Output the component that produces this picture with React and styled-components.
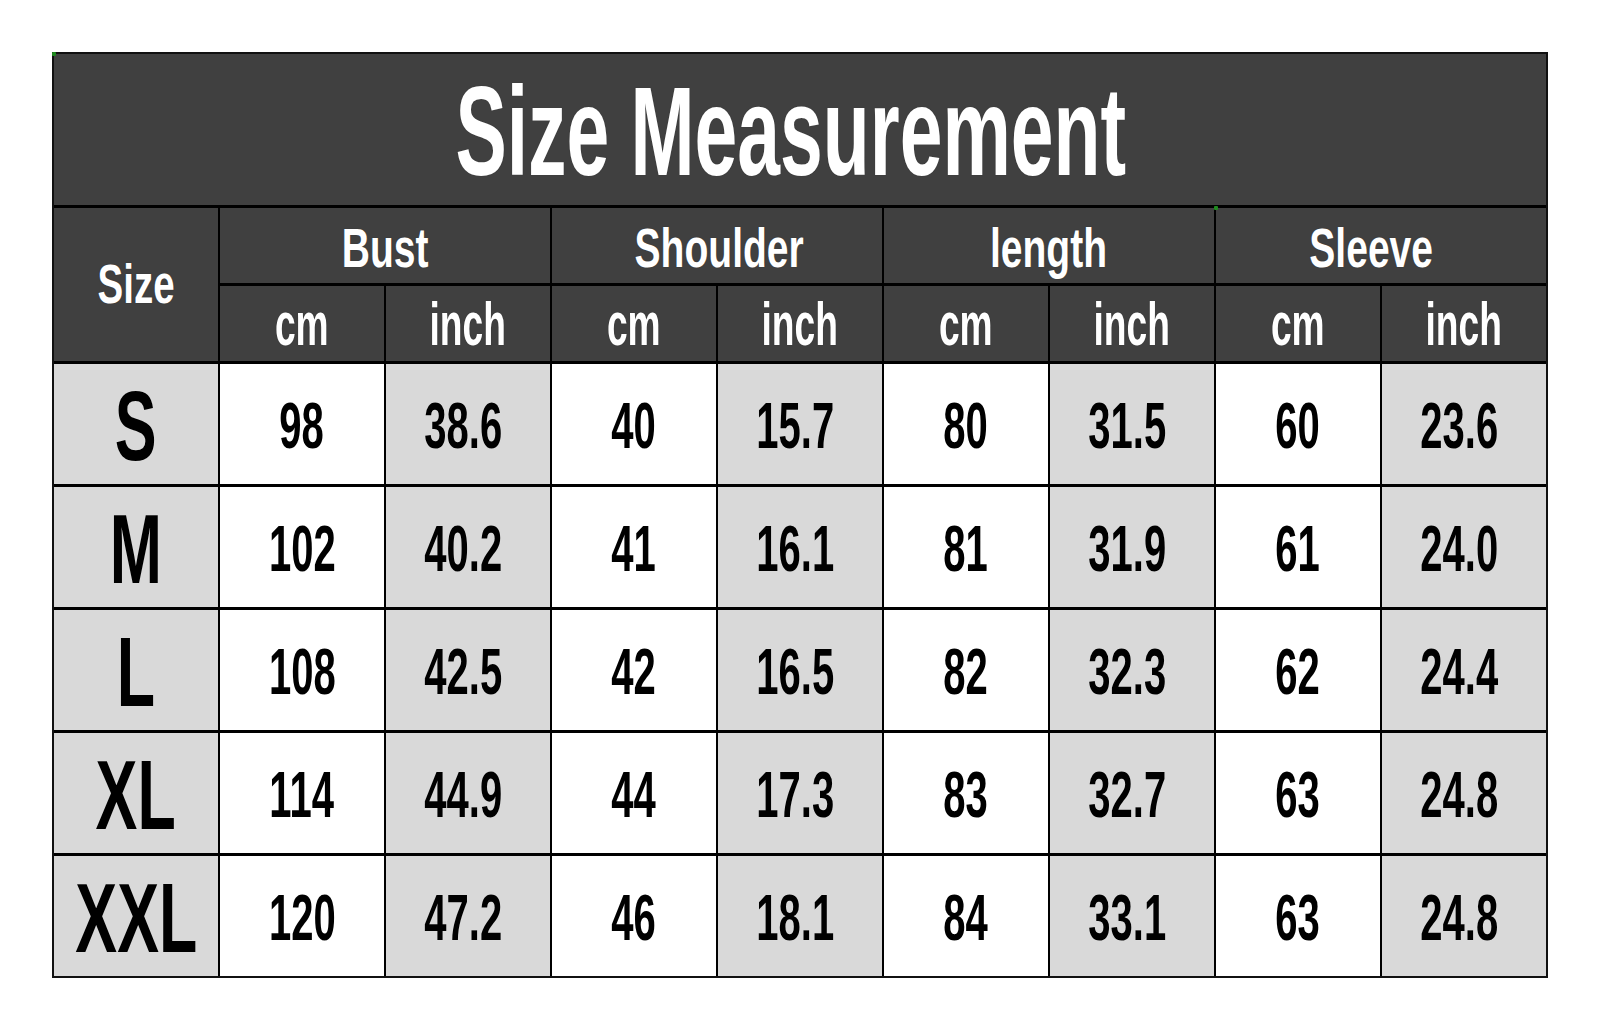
import React from "react";
import styled, { createGlobalStyle } from "styled-components";

const Global = createGlobalStyle`
  html, body { margin: 0; padding: 0; background: #ffffff; }
  body { font-family: "Liberation Sans", Arial, sans-serif; }
`;

const Page = styled.div`
  width: 1600px;
  height: 1031px;
  padding-top: 52px;
  box-sizing: border-box;
`;

const Sheet = styled.div`
  position: relative;
  box-sizing: border-box;
  width: 1496px;
  margin: 0 0 0 52px;
  display: grid;
  grid-template-columns: repeat(9, 1fr);
  grid-template-rows: 151px 75px 75px repeat(5, 120px);
  column-gap: 2px;
  row-gap: 3px;
  background: #000;
  border: 2px solid #111;
`;

const tones = {
  dark: "#404040",
  white: "#ffffff",
  gray: "#d9d9d9",
};

const Cell = styled.div`
  background: ${(p) => tones[p.$tone]};
  color: ${(p) => (p.$tone === "dark" ? "#ffffff" : "#000000")};
  display: flex;
  align-items: center;
  justify-content: center;
  overflow: hidden;
  grid-column: ${(p) => (p.$colSpan ? `span ${p.$colSpan}` : "auto")};
  grid-row: ${(p) => (p.$rowSpan ? `span ${p.$rowSpan}` : "auto")};
`;

const Label = styled.span`
  display: inline-block;
  font-family: "Liberation Sans", Arial, sans-serif;
  font-weight: 700;
  font-size: ${(p) => p.$size}px;
  line-height: 1;
  white-space: nowrap;
  transform: translate(${(p) => p.$dx || 0}px, ${(p) => p.$dy || 0}px)
    scaleX(${(p) => p.$squeeze || 0.61});
  transform-origin: center;
  text-shadow: ${(p) =>
    p.$light
      ? "0 0 1px rgba(40,40,40,0.9)"
      : "0 0 1px rgba(255,255,255,0.6)"};
`;

const Marker = styled.span`
  position: absolute;
  width: 4px;
  height: 4px;
  border-radius: 1px;
  background: #1f8a1f;
  left: ${(p) => p.$x}px;
  top: ${(p) => p.$y}px;
`;

const groups = [
  { name: "Bust", dx: 0 },
  { name: "Shoulder", dx: 2 },
  { name: "length", dx: -1 },
  { name: "Sleeve", dx: -10 },
];

const rows = [
  ["S", "98", "38.6", "40", "15.7", "80", "31.5", "60", "23.6"],
  ["M", "102", "40.2", "41", "16.1", "81", "31.9", "61", "24.0"],
  ["L", "108", "42.5", "42", "16.5", "82", "32.3", "62", "24.4"],
  ["XL", "114", "44.9", "44", "17.3", "83", "32.7", "63", "24.8"],
  ["XXL", "120", "47.2", "46", "18.1", "84", "33.1", "63", "24.8"],
];

export default function App() {
  return (
    <>
      <Global />
      <Page>
        <Sheet>
          <Cell $tone="dark" $colSpan={9}>
            <Label $light $size={126} $squeeze={0.61} $dx={-9} $dy={2}>
              Size Measurement
            </Label>
          </Cell>

          <Cell $tone="dark" $rowSpan={2}>
            <Label $light $size={55} $squeeze={0.7}>
              Size
            </Label>
          </Cell>
          {groups.map((g) => (
            <Cell key={g.name} $tone="dark" $colSpan={2}>
              <Label $light $size={55} $squeeze={0.71} $dx={g.dx} $dy={3}>
                {g.name}
              </Label>
            </Cell>
          ))}
          {groups.map((g) => (
            <React.Fragment key={g.name + "-units"}>
              <Cell $tone="dark">
                <Label $light $size={62} $squeeze={0.6}>
                  cm
                </Label>
              </Cell>
              <Cell $tone="dark">
                <Label $light $size={62} $squeeze={0.6}>
                  inch
                </Label>
              </Cell>
            </React.Fragment>
          ))}

          {rows.map((r) => (
            <React.Fragment key={r[0]}>
              <Cell $tone="gray">
                <Label $size={98} $squeeze={0.64} $dy={2}>
                  {r[0]}
                </Label>
              </Cell>
              {r.slice(1).map((v, i) => (
                <Cell key={i} $tone={i % 2 === 0 ? "white" : "gray"}>
                  <Label
                    $size={64}
                    $squeeze={0.625}
                    $dx={i % 2 === 0 ? 0 : -5}
                    $dy={2}
                  >
                    {v}
                  </Label>
                </Cell>
              ))}
            </React.Fragment>
          ))}

          <Marker $x={-2} $y={-2} />
          <Marker $x={1160} $y={152} />
        </Sheet>
      </Page>
    </>
  );
}
